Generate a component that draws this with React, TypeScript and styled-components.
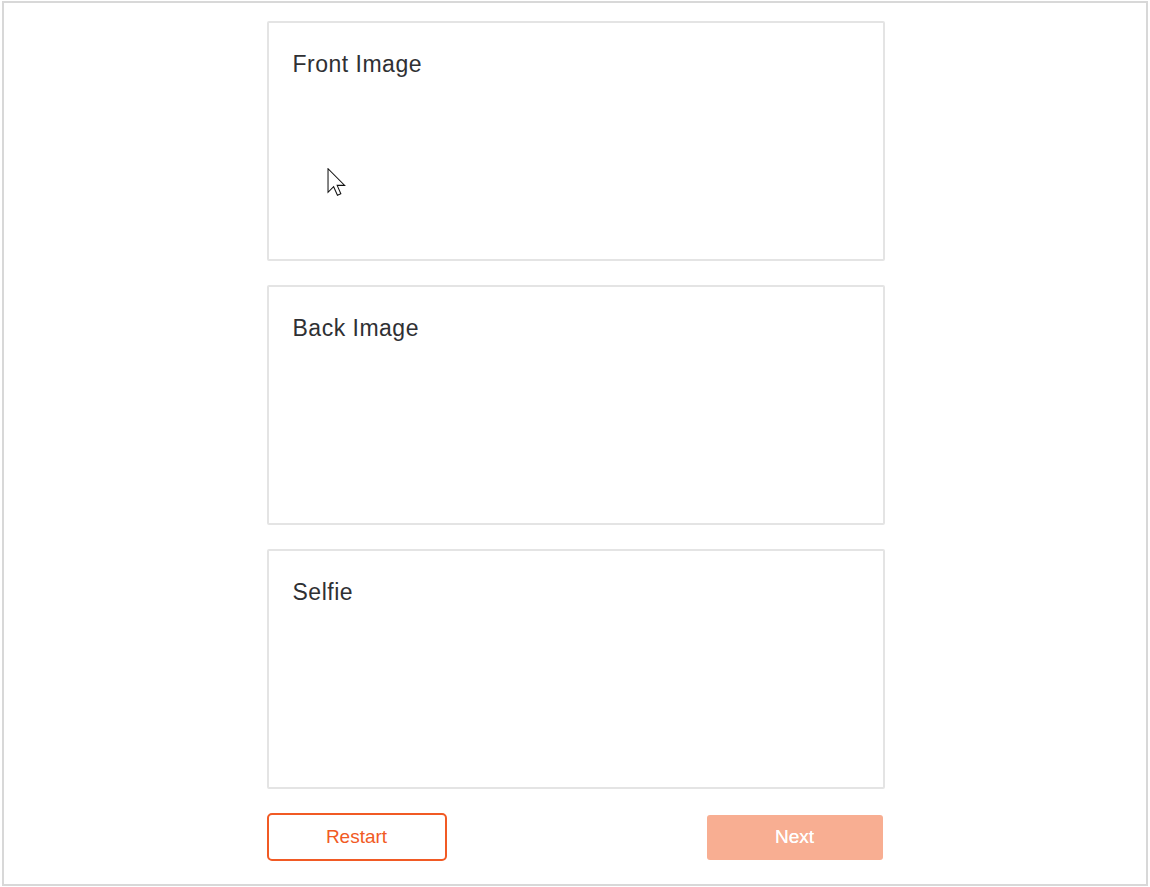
import React from "react";
import styled, { createGlobalStyle } from "styled-components";

const Global = createGlobalStyle`
  html, body { margin: 0; padding: 0; background: #ffffff; }
  body { font-family: "Liberation Sans", Arial, sans-serif; }
  * { box-sizing: border-box; }
`;

const Frame = styled.div`
  margin: 1px 0 0 2px;
  width: 1146px;
  height: 885px;
  border: 2px solid #d8d8d8;
  display: flex;
  justify-content: center;
  padding-top: 18px;
  padding-left: 1px;
`;

const Column = styled.div`
  width: 618px;
  display: flex;
  flex-direction: column;
  gap: 24px;
`;

const Card = styled.section`
  position: relative;
  height: 240px;
  border: 2px solid #e4e4e4;
  border-radius: 2px;
  padding: 28px 24px;
`;

const Title = styled.h2`
  margin: 0;
  font-size: 23px;
  font-weight: 400;
  line-height: 1.15;
  color: #2f3033;
  letter-spacing: 0.5px;
`;

const Cursor = styled.svg`
  position: absolute;
  left: 58px;
  top: 145px;
`;

const Actions = styled.div`
  display: flex;
  justify-content: space-between;
  align-items: center;
  margin-top: 0;
  height: 48px;
  padding-right: 2px;
`;

const OutlineButton = styled.button`
  width: 180px;
  height: 48px;
  border: 2px solid #f15a24;
  border-radius: 5px;
  background: #ffffff;
  color: #f15a24;
  font-family: "Liberation Sans", Arial, sans-serif;
  font-size: 19px;
  cursor: pointer;
`;

const FilledButton = styled.button`
  width: 176px;
  height: 45px;
  border: none;
  border-radius: 3px;
  background: #f8ae92;
  color: #ffffff;
  font-family: "Liberation Sans", Arial, sans-serif;
  font-size: 19px;
  text-shadow: 0 0 0.4px #ffffff;
  cursor: default;
`;

const sections = ["Front Image", "Back Image", "Selfie"];

export default function App() {
  return (
    <>
      <Global />
      <Frame>
        <Column>
          {sections.map((s, i) => (
            <Card key={s}>
              <Title>{s}</Title>
              {i === 0 && (
                <Cursor width="19" height="28" viewBox="0 0 12.5 19" aria-hidden>
                  <path
                    d="M0.5 0.5 L0.5 16.5 L4.3 12.7 L6.9 18.5 L9.2 17.5 L6.7 11.8 L11.8 11.8 Z"
                    fill="#ffffff"
                    stroke="#111111"
                    strokeWidth="0.7"
                    strokeLinejoin="miter"
                  />
                </Cursor>
              )}
            </Card>
          ))}
          <Actions>
            <OutlineButton>Restart</OutlineButton>
            <FilledButton>Next</FilledButton>
          </Actions>
        </Column>
      </Frame>
    </>
  );
}
